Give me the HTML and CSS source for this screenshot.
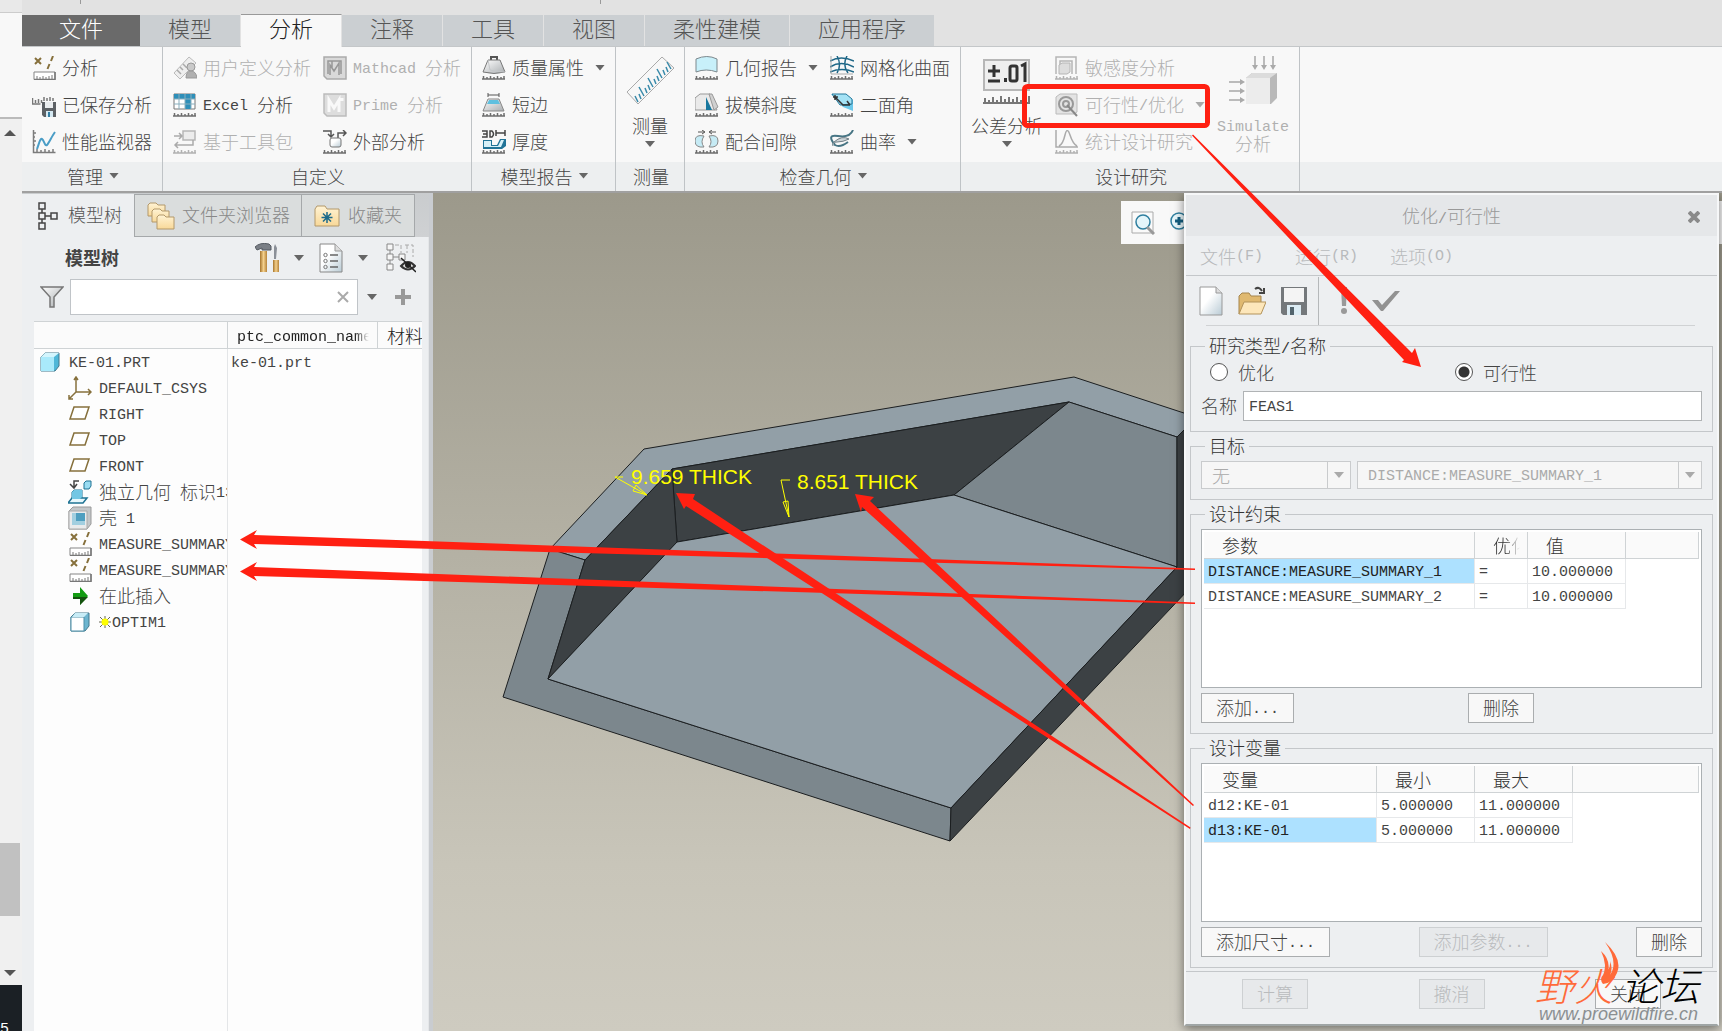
FILE: index.html
```
<!DOCTYPE html>
<html lang="zh-CN">
<head>
    <meta charset="UTF-8">
    <meta name="viewport" content="width=device-width, initial-scale=1.0">
    <title>优化/可行性</title>
    <link rel="stylesheet" href="styles.css">
</head>
<body>
    <!-- icon sprite -->
    <svg class="sprite" width="0" height="0">
        <defs>
            <linearGradient id="metal" x1="0" y1="0" x2="1" y2="1"><stop offset="0" stop-color="#fff"/><stop offset="1" stop-color="#a9adb0"/></linearGradient>
            <linearGradient id="paper" x1="0" y1="0" x2="1" y2="1"><stop offset="0.4" stop-color="#fff"/><stop offset="1" stop-color="#b9cbd5"/></linearGradient>
            <linearGradient id="gold" x1="0" y1="0" x2="0" y2="1"><stop offset="0" stop-color="#fff3d4"/><stop offset="1" stop-color="#f8d898"/></linearGradient>
            <linearGradient id="wood" x1="0" y1="0" x2="1" y2="0"><stop offset="0" stop-color="#a5742c"/><stop offset="0.5" stop-color="#f4d08c"/><stop offset="1" stop-color="#b5833a"/></linearGradient>
        </defs>
        <symbol id="ticks" viewBox="0 0 24 24"><path d="M0 23h23M1.500 23v-3M5 23v-2M8.500 23v-3M12 23v-2M15.500 23v-3M19 23v-2M22 23v-3" stroke="#6d6d6d" stroke-width="1.500" fill="none"/></symbol>
        <symbol id="i-measure" viewBox="0 0 24 24"><path d="M3 2l6 6M9 2l-6 6M21 0l-2 5M17.500 8l-2 5" stroke="#86703c" stroke-width="2" fill="none"/><path d="M2 16h21v7.500h-21z" fill="#fff" stroke="#858585"/><path d="M2 23.500h21v-7.500" stroke="#777" stroke-width="1.500" fill="none"/><path d="M5 23v-3M8 23v-2M11 23v-3M14 23v-2M17 23v-3M20 23v-4" stroke="#777"/></symbol>
        <symbol id="i-saved" viewBox="0 0 24 24"><path d="M.5 5v6h8M3.500 10v-3M6.500 10v-4M9.500 10v-3M12 8V4M15 8V5M18 8V4M21 8V5M.5 11h8" stroke="#777" stroke-width="1.500" fill="none"/><path d="M10 9h14v15h-12l-2-2z" fill="#5c6064"/><path d="M13 9h8v6h-8z" fill="#e9ecee"/><path d="M14 18h7v6h-7z" fill="#d5e9f2"/><path d="M16 19h2v5h-2z" fill="#327fa5"/></symbol>
        <symbol id="i-monitor" viewBox="0 0 24 24"><path d="M1.500 0v22.500h22M1 3h3M1 7h2M1 11h3M1 15h2M5 22v-3M9 22v-2M13 22v-3M17 22v-2M21 22v-3" stroke="#7c7c7c" stroke-width="1.500" fill="none"/><path d="M5 19C7 14 8 8 10 9s3 8 5 6 5-9 8-13" fill="none" stroke="#4a9dc6" stroke-width="2"/></symbol>
        <symbol id="i-user" viewBox="0 0 24 24"><path d="M1 17L16 1l7 6L7 23z" fill="#eee" stroke="#bbb"/><path d="M4 14l4 4M7 11l3 3M10 8l4 4" stroke="#aaa" stroke-width="1.500"/><circle cx="18" cy="11" r="4" fill="#c9c9c9" stroke="#999"/><path d="M13 22q0-7 5-7t6 7z" fill="#b0b0b0" stroke="#999"/></symbol>
        <symbol id="i-excel" viewBox="0 0 24 24"><path d="M1 1h21v15h-21z" fill="#fff" stroke="#777"/><path d="M1 1h21v5h-21zM12 6h6v10h-6z" fill="#2e8fb9"/><path d="M1 6h21M1 11h21M6 1v15M12 1v15M18 1v15" stroke="#89aebd" fill="none"/><use href="#ticks"/></symbol>
        <symbol id="i-toolkit" viewBox="0 0 24 24"><path d="M10 1h12v9h-12z" fill="#ececec" stroke="#b6b6b6" stroke-width="1.500"/><path d="M1 6h8M6 3l3 3-3 3M20 10v5h-18M5 12l-3 3 3 3" stroke="#aaa" stroke-width="1.500" fill="none"/><g opacity=".5"><use href="#ticks"/></g></symbol>
        <symbol id="i-mathcad" viewBox="0 0 24 24"><path d="M1 1h22v22h-19l-3-3z" fill="#d9d9d9" stroke="#aaa" stroke-width="1.500"/><path d="M5 18V5h13v13M7 19V9l4 6 5-8v12M9 5v7" stroke="#979797" stroke-width="1.500" fill="none"/></symbol>
        <symbol id="i-prime" viewBox="0 0 24 24"><path d="M1 1h22v22h-19l-3-3z" fill="#ddd" stroke="#bcbcbc" stroke-width="1.500"/><path d="M6 19V7l5 8 5-8v12M19 5v3" stroke="#f9f9f9" stroke-width="3" fill="none"/></symbol>
        <symbol id="i-external" viewBox="0 0 24 24"><path d="M0 1h8v6M5 4l3 3 3-3M15 8V3h8M20 0l3 3-3 3" stroke="#555" stroke-width="1.500" fill="none"/><rect x="7" y="8" width="11" height="9" rx="2" fill="url(#paper)" stroke="#777"/><use href="#ticks"/></symbol>
        <symbol id="i-mass" viewBox="0 0 24 24"><path d="M9 4V1h6v3" stroke="#555" stroke-width="2" fill="none"/><path d="M6 4h12l5 12q-11 3-22 0z" fill="url(#metal)" stroke="#777"/><path d="M6 4l2 10q5 2 15 2" fill="none" stroke="#c4c7c9"/><use href="#ticks"/></symbol>
        <symbol id="i-short" viewBox="0 0 24 24"><path d="M6 2h11M6 0v4M17 0v4" stroke="#555" fill="none"/><path d="M6 6h11l5 12H1z" fill="url(#metal)" stroke="#888"/><path d="M7 7h9l2 4H5z" fill="#5fc0df"/><use href="#ticks"/></symbol>
        <symbol id="i-thick" viewBox="0 0 24 24"><path d="M0 1h5v6H0M1 4h4M8 1v6h2q3-3 0-6zM14 3h9M14 0v6M23 0v6" stroke="#444" stroke-width="1.500" fill="none"/><path d="M1 10h9v5h5l3-6h6v7l-4 3H1z" fill="#207397"/><path d="M2 11h7v5h7l3-6h3l-3 7H2z" fill="#d6f0f8"/><use href="#ticks"/></symbol>
        <symbol id="i-ruler" viewBox="0 0 48 48"><path d="M1 36L36 1l12 11L12 48z" fill="#f7f7f7" stroke="#aaa"/><path d="M12 46l-3-6M15 43l-2-5M18 40l-5-9M21 37l-2-5M24 34l-2-5M27 31l-5-9M30 28l-2-5M33 25l-2-5M36 22l-5-9M39 19l-2-5M42 16l-2-5M45 13l-4-7" stroke="#3889a9" stroke-width="1.500"/></symbol>
        <symbol id="i-geom" viewBox="0 0 24 24"><path d="M1 3q11-5 21 0v13q-11-4-21 0z" fill="#c8f0fa" stroke="#7c888d"/><use href="#ticks"/></symbol>
        <symbol id="i-draft" viewBox="0 0 24 24"><path d="M0 5l5-4h10l7 16H0z" fill="#eaeaea" stroke="#999"/><path d="M11 4l6 13h-6z" fill="#18779e"/><path d="M14 1h3l6 13-4 3z" fill="#d0d0d0" stroke="#999"/><use href="#ticks"/></symbol>
        <symbol id="i-clear" viewBox="0 0 24 24"><path d="M3 2h6M21 2h-6M7 0l3 2-3 2M17 0l-3 2 3 2" stroke="#555" fill="none"/><path d="M9 6Q0 4 0 11t9 6q-4-5 0-11zM14 6q9-2 9 5t-9 6q4-5 0-11z" fill="#c6ebf5" stroke="#888"/><use href="#ticks"/></symbol>
        <symbol id="i-mesh" viewBox="0 0 24 24"><path d="M0 5q11-6 24 0M0 11q11-7 24 0M0 16q12-5 24 0M7 0q5 9 0 17M17 0q-5 9 1 17" fill="none" stroke="#1e6787" stroke-width="1.500"/><path d="M1 0v18h22" stroke="#aaa" fill="none"/><use href="#ticks"/></symbol>
        <symbol id="i-dihedral" viewBox="0 0 24 24"><path d="M1 1h15l7 6v11l-10-4z" fill="#6cc8ea"/><path d="M2 1l8 11 12-1V6l-6-5z" fill="#a4e2f5" stroke="#26799b"/><path d="M3 4h5M5 2v5M5 4l8 8h7M17 8l3 4" stroke="#333" stroke-width="1.500" fill="none"/><use href="#ticks"/></symbol>
        <symbol id="i-curve" viewBox="0 0 24 24"><path d="M23 0Q20 8 8 6T5 15q5 3 13-3" fill="none" stroke="#477584" stroke-width="2"/><path d="M4 12q8-7 15-3-6 3-12 3t-4 4" fill="#cdd5d9" stroke="#718087"/><use href="#ticks"/></symbol>
        <symbol id="i-tol" viewBox="0 0 48 48"><path d="M1 4h45v30H1z" fill="#efefef" stroke="#b7b7b7" stroke-width="2"/><path d="M5 15h12M11 9v12M5 25h12M38 10l4-2v18" fill="none" stroke="#333" stroke-width="3"/><rect x="27" y="10" width="7" height="15" rx="2" fill="none" stroke="#333" stroke-width="3"/><path d="M21 22h3v4h-3z" fill="#333"/><path d="M0 47h47M2 47v-5M6 47v-3M10 47v-6M14 47v-3M18 47v-7M22 47v-4M26 47v-6M30 47v-4M34 47v-6M38 47v-3M42 47v-6M46 47v-7" stroke="#777" stroke-width="2"/></symbol>
        <symbol id="i-sens" viewBox="0 0 24 24"><path d="M1 18V1h20v17M5 18V5h12v13" fill="none" stroke="#b5b5b5" stroke-width="1.500"/><path d="M4 9l3-2h8v9l-3 2H4z" fill="#ddd" stroke="#b5b5b5"/><g opacity=".5"><use href="#ticks"/></g></symbol>
        <symbol id="i-feas" viewBox="0 0 24 24"><path d="M1 4l4-3h17v18l-3 2H1z" fill="#e3e3e3" stroke="#bbb"/><circle cx="11" cy="11" r="7" fill="none" stroke="#999" stroke-width="2"/><circle cx="11" cy="11" r="3" fill="none" stroke="#999" stroke-width="2"/><path d="M12 12l10 11" stroke="#888" stroke-width="2"/></symbol>
        <symbol id="i-stat" viewBox="0 0 24 24"><path d="M1 0v17h22M4 16Q8 14 10 5t5 0 7 11" fill="none" stroke="#aaa" stroke-width="1.500"/><g opacity=".5"><use href="#ticks"/></g></symbol>
        <symbol id="i-sim" viewBox="0 0 48 48"><path d="M17 22l6-5h25v25l-6 6H17z" fill="#b9b9b9"/><path d="M17 22h24v26H17z" fill="#ececec"/><path d="M17 22l6-5h25l-7 5z" fill="#dcdcdc"/><path d="M26 0v11M35 0v11M44 0v11M0 26h13M0 35h13M0 44h13" stroke="#bbb" stroke-width="2"/><path d="M23 9l3 5 3-5zM32 9l3 5 3-5zM41 9l3 5 3-5zM11 23l5 3-5 3zM11 32l5 3-5 3zM11 41l5 3-5 3z" fill="#aaa"/></symbol>
        <symbol id="i-tree" viewBox="0 0 20 28"><path d="M1 1h6v6H1zM1 11h6v6H1zM1 21h6v6H1zM13 11h6v6h-6zM4 7v4M4 17v4M7 14h6" fill="none" stroke="#444" stroke-width="1.500"/></symbol>
        <symbol id="i-folders" viewBox="0 0 28 28"><g fill="url(#gold)" stroke="#b3986a"><path d="M1 14V3l2-2h6l2 2h7v11z"/><path d="M5 20V9l2-2h6l2 2h7v11z"/><path d="M10 27V15l2-2h5l2 2h8v12z"/></g></symbol>
        <symbol id="i-fav" viewBox="0 0 26 22"><path d="M1 21V4l2-3h8l2 3h12v17z" fill="url(#gold)" stroke="#b3986a"/><path d="M13 7v11M7.500 12.500h11M9 8.500l8 8M17 8.500l-8 8" stroke="#1b6a8a" stroke-width="1.500"/></symbol>
        <symbol id="i-tools" viewBox="0 0 24 30"><path d="M0 4q5-5 14-3l2 2v4h-9V5L2 7z" fill="#7a7f86" stroke="#555b62"/><path d="M5 8h7v21H5z" fill="url(#wood)"/><path d="M20 1l2 4-1 11h-2L19 4z" fill="#8b9098"/><path d="M18 17h6v12h-6z" fill="url(#wood)"/></symbol>
        <symbol id="i-list" viewBox="0 0 24 30"><path d="M1 1h15l7 7v21H1z" fill="url(#paper)" stroke="#888"/><path d="M16 1v7h7" fill="#ddd" stroke="#999"/><path d="M11 12h8M11 18h8M11 24h8" stroke="#666" stroke-width="1.500"/><g fill="none" stroke="#777"><circle cx="6.500" cy="12" r="1.700"/><circle cx="6.500" cy="18" r="1.700"/><circle cx="6.500" cy="24" r="1.700"/></g></symbol>
        <symbol id="i-hide" viewBox="0 0 30 30"><path d="M1 1h6v6H1zM1 11h6v6H1zM1 21h6v6H1zM13 11h6v6h-6zM4 7v4M4 17v4M7 14h6" fill="#f6f6f6" stroke="#888"/><path d="M9 2h6v8M19 2h8v12M21 2v8" fill="none" stroke="#aaa" stroke-dasharray="4 2"/><path d="M15 23q7-8 14 0-7 7-14 0z" fill="#ddd" stroke="#333" stroke-width="2"/><circle cx="22" cy="22" r="3" fill="#222"/><path d="M15 15l15 14" stroke="#222" stroke-width="1.500"/></symbol>
        <symbol id="i-funnel" viewBox="0 0 24 22"><path d="M1 1h22l-9 10v10h-4V11z" fill="url(#metal)" stroke="#777" stroke-width="1.500"/></symbol>
        <symbol id="i-part" viewBox="0 0 20 20"><path d="M1 5l4-4h14v13l-4 5H1z" fill="#4fb7d8" stroke="#43798d"/><path d="M1 5h13v14H1z" fill="#a9eafb"/><path d="M1 5l4-4h14l-5 4z" fill="#d3f5fd"/></symbol>
        <symbol id="i-optim" viewBox="0 0 20 20"><path d="M1 5l4-4h14v13l-4 5H1z" fill="#6db5cf" stroke="#43798d"/><path d="M1 5h13v14H1z" fill="#fff" stroke="#4c8fa8"/><path d="M2 5l3-4h13l-4 4z" fill="#c8ecf6"/></symbol>
        <symbol id="i-csys" viewBox="0 0 24 24"><path d="M8 1v15h15M8 16l-7 7M6 4l2-3 2 3M20 13l3 3-3 3M1 19v4h4" fill="none" stroke="#86703c" stroke-width="1.500"/></symbol>
        <symbol id="i-plane" viewBox="0 0 24 24"><path d="M6 5h15l-4 12H2z" fill="#fff" stroke="#86703c" stroke-width="1.500"/></symbol>
        <symbol id="i-indep" viewBox="0 0 24 24"><path d="M16 3l2-2h5v5l-2 3h-5zM4 12l2-2h8v8l-2 2H4z" fill="#9adcf2" stroke="#1f7393"/><path d="M0 23l4-5h15l-4 5z" fill="#e8f8fc" stroke="#1f7393" stroke-width="1.500"/><path d="M4 12l2-2h8v7l-2 2H4z" fill="#73c7e4"/><path d="M11 1H6v7M2 4l4 4 3-4" stroke="#444" stroke-width="1.500" fill="none"/></symbol>
        <symbol id="i-shell" viewBox="0 0 24 24"><path d="M1 5l4-4h18v17l-4 5H1z" fill="#c3c7c9" stroke="#999"/><path d="M1 5h18v18H1z" fill="#e9ebec" stroke="#aaa"/><path d="M4 7h13v12H4z" fill="#4f9fc0"/><path d="M4 7v12l4-4V7zM4 19h13v-4H8z" fill="#a2cfe0"/></symbol>
        <symbol id="i-insert" viewBox="0 0 24 24"><path d="M5 9h7V3l8 9-8 9v-6H5z" fill="#149c14"/><path d="M5 13h15l-8 8v-6H5z" fill="#14520f"/></symbol>
        <symbol id="i-spark" viewBox="0 0 12 12"><path d="M6 0v12M0 6h12M1 1l10 10M11 1L1 11" stroke="#665" /><circle cx="6" cy="6" r="3.500" fill="#ff0"/></symbol>
        <symbol id="i-new" viewBox="0 0 24 30"><path d="M1 1h16l6 6v22H1z" fill="url(#paper)" stroke="#999"/><path d="M17 1v6h6" fill="#ddd" stroke="#999"/></symbol>
        <symbol id="i-open" viewBox="0 0 28 30"><path d="M1 28V10l3-3h7l2 3h10v8" fill="#e0b970" stroke="#a5854d"/><path d="M1 28l5-12h22l-5 12z" fill="#fde7bb" stroke="#b3935a"/><path d="M17 3q4-3 7 2M26 2v5h-5" stroke="#444" stroke-width="2" fill="none"/></symbol>
        <symbol id="i-save" viewBox="0 0 26 30"><path d="M0 1h26v28H2l-2-2z" fill="#74787b"/><path d="M3 2h20v14H3z" fill="#f4f4f4"/><path d="M6 19h14v10H6z" fill="#dcecf4"/><path d="M9 21h4v8H9z" fill="#52646d"/></symbol>
        <symbol id="i-run" viewBox="0 0 8 28"><path d="M1 0h6L6 19H2z" fill="#999"/><circle cx="4" cy="24" r="3" fill="#999"/></symbol>
        <symbol id="i-check" viewBox="0 0 28 20"><path d="M0 9h6l4 5L23 0h5L11 20H9z" fill="#929292"/></symbol>
        <symbol id="i-fit" viewBox="0 0 24 24"><path d="M1 1h21v21H1z" fill="#fafafa" stroke="#aaa"/><circle cx="12" cy="11" r="7" fill="#e4f5fa" stroke="#2f7f9f" stroke-width="1.500"/><path d="M16 16l7 7" stroke="#999" stroke-width="3"/></symbol>
        <symbol id="i-zoomin" viewBox="0 0 24 24"><circle cx="10" cy="10" r="8" fill="#e9f8fc" stroke="#2f7f9f" stroke-width="1.500"/><path d="M6 10h8M10 6v8" stroke="#145f80" stroke-width="3"/><path d="M16 16l7 7" stroke="#999" stroke-width="3"/></symbol>
    </svg>

    <div class="app">
        <aside class="gutter">
            <div class="gutter-top"></div>
            <div class="gutter-blank"></div>
            <div class="scrollbar">
                <i class="arrow-up"></i>
                <div class="thumb"></div>
                <i class="arrow-down"></i>
            </div>
            <div class="taskbar"><span class="en">5</span></div>
        </aside>

        <div class="main">
            <header class="ribbon">
                <div class="titlebar"><i class="tick tick-1"></i><i class="tick tick-2"></i></div>
                <nav class="tabs">
                    <button class="tab file">文件</button>
                    <button class="tab">模型</button>
                    <button class="tab active">分析</button>
                    <button class="tab">注释</button>
                    <button class="tab">工具</button>
                    <button class="tab">视图</button>
                    <button class="tab wide">柔性建模</button>
                    <button class="tab wide">应用程序</button>
                </nav>
                <div class="groups">
                    <section class="group g-manage">
                        <div class="group-body">
                            <div class="col">
                                <button class="tool"><svg><use href="#i-measure"/></svg>分析</button>
                                <button class="tool"><svg><use href="#i-saved"/></svg>已保存分析</button>
                                <button class="tool"><svg><use href="#i-monitor"/></svg>性能监视器</button>
                            </div>
                        </div>
                        <div class="group-label">管理<i class="caret"></i></div>
                    </section>
                    <section class="group g-custom">
                        <div class="group-body">
                            <div class="col">
                                <button class="tool" disabled><svg><use href="#i-user"/></svg>用户定义分析</button>
                                <button class="tool"><svg><use href="#i-excel"/></svg><span class="en">Excel </span>分析</button>
                                <button class="tool" disabled><svg><use href="#i-toolkit"/></svg>基于工具包</button>
                            </div>
                            <div class="col">
                                <button class="tool" disabled><svg><use href="#i-mathcad"/></svg><span class="en">Mathcad </span>分析</button>
                                <button class="tool" disabled><svg><use href="#i-prime"/></svg><span class="en">Prime </span>分析</button>
                                <button class="tool"><svg><use href="#i-external"/></svg>外部分析</button>
                            </div>
                        </div>
                        <div class="group-label">自定义</div>
                    </section>
                    <section class="group g-report">
                        <div class="group-body">
                            <div class="col">
                                <button class="tool"><svg><use href="#i-mass"/></svg>质量属性<i class="caret"></i></button>
                                <button class="tool"><svg><use href="#i-short"/></svg>短边</button>
                                <button class="tool"><svg><use href="#i-thick"/></svg>厚度</button>
                            </div>
                        </div>
                        <div class="group-label">模型报告<i class="caret"></i></div>
                    </section>
                    <section class="group g-measure">
                        <div class="group-body">
                            <button class="big-tool"><svg><use href="#i-ruler"/></svg><span>测量</span><i class="caret"></i></button>
                        </div>
                        <div class="group-label">测量</div>
                    </section>
                    <section class="group g-inspect">
                        <div class="group-body">
                            <div class="col">
                                <button class="tool"><svg><use href="#i-geom"/></svg>几何报告<i class="caret"></i></button>
                                <button class="tool"><svg><use href="#i-draft"/></svg>拔模斜度</button>
                                <button class="tool"><svg><use href="#i-clear"/></svg>配合间隙</button>
                            </div>
                            <div class="col">
                                <button class="tool"><svg><use href="#i-mesh"/></svg>网格化曲面</button>
                                <button class="tool"><svg><use href="#i-dihedral"/></svg>二面角</button>
                                <button class="tool"><svg><use href="#i-curve"/></svg>曲率<i class="caret"></i></button>
                            </div>
                        </div>
                        <div class="group-label">检查几何<i class="caret"></i></div>
                    </section>
                    <section class="group g-study">
                        <div class="group-body">
                            <button class="big-tool"><svg><use href="#i-tol"/></svg><span>公差分析</span><i class="caret"></i></button>
                            <div class="col">
                                <button class="tool" disabled><svg><use href="#i-sens"/></svg>敏感度分析</button>
                                <button class="tool" disabled><svg><use href="#i-feas"/></svg>可行性<span class="en">/</span>优化<i class="caret"></i></button>
                                <button class="tool" disabled><svg><use href="#i-stat"/></svg>统计设计研究</button>
                            </div>
                            <button class="big-tool" disabled><svg><use href="#i-sim"/></svg><span class="en">Simulate</span><span>分析</span></button>
                        </div>
                        <div class="group-label">设计研究</div>
                    </section>
                    <section class="group g-rest">
                        <div class="group-body"></div>
                        <div class="group-label"></div>
                    </section>
                </div>
            </header>

            <div class="workspace">
                <aside class="navigator">
                    <div class="nav-tabs">
                        <button class="nav-tab nav-tree active"><svg width="20" height="28"><use href="#i-tree"/></svg>模型树</button>
                        <button class="nav-tab nav-folders"><svg width="28" height="28"><use href="#i-folders"/></svg>文件夹浏览器</button>
                        <button class="nav-tab nav-fav"><svg width="26" height="22"><use href="#i-fav"/></svg>收藏夹</button>
                    </div>
                    <div class="nav-head">
                        <h2>模型树</h2>
                        <button aria-label="设置"><svg width="24" height="30"><use href="#i-tools"/></svg><i class="caret"></i></button>
                        <button aria-label="显示"><svg width="24" height="30"><use href="#i-list"/></svg><i class="caret"></i></button>
                        <button aria-label="隐藏"><svg width="30" height="30"><use href="#i-hide"/></svg></button>
                    </div>
                    <div class="filter">
                        <svg width="24" height="22"><use href="#i-funnel"/></svg>
                        <div class="filter-box">
                            <input type="text" aria-label="过滤器">
                            <button aria-label="清除"><svg width="12" height="12"><path d="M1 1l10 10M11 1L1 11" stroke="#aaa" stroke-width="2"/></svg></button>
                        </div>
                        <i class="caret"></i>
                        <button aria-label="添加"><svg width="16" height="16"><path d="M8 0v16M0 8h16" stroke="#999" stroke-width="4"/></svg></button>
                    </div>
                    <div class="tree-wrap">
                        <table class="tree">
                            <colgroup><col class="c-name"><col class="c-common"><col></colgroup>
                            <thead>
                                <tr><th></th><th><span class="en fade">ptc_common_name</span></th><th>材料</th></tr>
                            </thead>
                            <tbody>
                                <tr class="root"><td><div><svg width="20" height="20"><use href="#i-part"/></svg><span class="en">KE-01.PRT</span></div></td><td><div><span class="en">ke-01.prt</span></div></td><td></td></tr>
                                <tr><td><div><svg><use href="#i-csys"/></svg><span class="en">DEFAULT_CSYS</span></div></td><td></td><td></td></tr>
                                <tr><td><div><svg><use href="#i-plane"/></svg><span class="en">RIGHT</span></div></td><td></td><td></td></tr>
                                <tr><td><div><svg><use href="#i-plane"/></svg><span class="en">TOP</span></div></td><td></td><td></td></tr>
                                <tr><td><div><svg><use href="#i-plane"/></svg><span class="en">FRONT</span></div></td><td></td><td></td></tr>
                                <tr><td><div><svg><use href="#i-indep"/></svg>独立几何<span class="en"> </span>标识<span class="en">13</span></div></td><td></td><td></td></tr>
                                <tr><td><div><svg><use href="#i-shell"/></svg>壳<span class="en"> 1</span></div></td><td></td><td></td></tr>
                                <tr><td><div><svg><use href="#i-measure"/></svg><span class="en">MEASURE_SUMMARY_1</span></div></td><td></td><td></td></tr>
                                <tr><td><div><svg><use href="#i-measure"/></svg><span class="en">MEASURE_SUMMARY_2</span></div></td><td></td><td></td></tr>
                                <tr><td><div><svg><use href="#i-insert"/></svg>在此插入</div></td><td></td><td></td></tr>
                                <tr><td><div><svg class="small"><use href="#i-optim"/></svg><svg class="spark"><use href="#i-spark"/></svg><span class="en">OPTIM1</span></div></td><td></td><td></td></tr>
                            </tbody>
                        </table>
                    </div>
                </aside>

                <main class="viewport">
                    <!-- shelled part, drawn in viewport units -->
                    <svg class="model" width="1289" height="838" viewBox="433 193 1289 838">
                        <g stroke="#1b1e20" stroke-width="1" stroke-linejoin="round">
                            <path d="M550 549L644 449 1074 377 1190 415 1190 424 1177 437 1069 402 672 469 585 560z" fill="#929fa7"/>
                            <path d="M550 549L585 560 548 679 951 808 950 841 503 697z" fill="#7c878d"/>
                            <path d="M672 469L1069 402 954 495 677 542z" fill="#3c4144"/>
                            <path d="M672 469L677 542 548 679 585 560z" fill="#3c4144"/>
                            <path d="M1069 402L1177 437 1177 567 954 495z" fill="#7c878d"/>
                            <path d="M677 542L954 495 1177 567 951 808 548 679z" fill="#929fa7"/>
                            <path d="M951 808L1177 567 1177 437 1190 424 1190 588 950 841z" fill="#3c4144"/>
                        </g>
                        <g fill="none" stroke="#ff0" stroke-width="1">
                            <path d="M623 477h-8l32 18-14-4 3-6 11 10"/>
                            <path d="M790 480h-9l8 37-6-15 5-1 1 16"/>
                        </g>
                        <text x="631" y="484">9.659 THICK</text>
                        <text x="797" y="489">8.651 THICK</text>
                    </svg>

                    <div class="view-tools">
                        <svg width="24" height="24"><use href="#i-fit"/></svg>
                        <svg width="24" height="24"><use href="#i-zoomin"/></svg>
                    </div>

                    <form class="dialog" onsubmit="return false">
                        <div class="dialog-title"><span>优化<span class="en">/</span>可行性</span><button type="button" aria-label="关闭"><svg width="12" height="12"><path d="M1 1l10 10M11 1L1 11" stroke="#8a8a8a" stroke-width="4"/></svg></button></div>
                        <div class="menubar">
                            <button type="button" disabled>文件<span class="en">(F)</span></button>
                            <button type="button" disabled>运行<span class="en">(R)</span></button>
                            <button type="button" disabled>选项<span class="en">(O)</span></button>
                        </div>
                        <div class="toolbar">
                            <button type="button" aria-label="新建"><svg width="24" height="30"><use href="#i-new"/></svg></button>
                            <button type="button" aria-label="打开"><svg width="28" height="30"><use href="#i-open"/></svg></button>
                            <button type="button" aria-label="保存"><svg width="26" height="30"><use href="#i-save"/></svg></button>
                            <i class="sep"></i>
                            <button type="button" aria-label="运行" disabled><svg width="8" height="28"><use href="#i-run"/></svg></button>
                            <button type="button" aria-label="确定" disabled><svg width="28" height="20"><use href="#i-check"/></svg></button>
                        </div>

                        <fieldset class="study">
                            <legend>研究类型<span class="en">/</span>名称</legend>
                            <div class="radios">
                                <label><input type="radio" name="type">优化</label>
                                <label><input type="radio" name="type" checked>可行性</label>
                            </div>
                            <div class="name-row">
                                <label for="study-name">名称</label>
                                <input type="text" id="study-name" value="FEAS1">
                            </div>
                        </fieldset>

                        <fieldset>
                            <legend>目标</legend>
                            <div class="combos">
                                <div class="combo short"><select aria-label="目标" disabled><option>无</option></select><span><i class="caret"></i></span></div>
                                <div class="combo"><select class="en" aria-label="目标参数" disabled><option>DISTANCE:MEASURE_SUMMARY_1</option></select><span><i class="caret"></i></span></div>
                            </div>
                        </fieldset>

                        <fieldset>
                            <legend>设计约束</legend>
                            <div class="listbox">
                                <table>
                                    <colgroup><col class="w-param"><col class="w-op"><col class="w-num"><col></colgroup>
                                    <thead><tr><th>参数</th><th><div class="fade">优化</div></th><th>值</th><th></th></tr></thead>
                                    <tbody>
                                        <tr><td class="selected">DISTANCE:MEASURE_SUMMARY_1</td><td>=</td><td>10.000000</td></tr>
                                        <tr><td>DISTANCE:MEASURE_SUMMARY_2</td><td>=</td><td>10.000000</td></tr>
                                    </tbody>
                                </table>
                            </div>
                            <div class="actions constraints">
                                <button type="button">添加<span class="en">...</span></button>
                                <button type="button">删除</button>
                            </div>
                        </fieldset>

                        <fieldset>
                            <legend>设计变量</legend>
                            <div class="listbox">
                                <table>
                                    <colgroup><col class="w-var"><col class="w-num"><col class="w-num"><col></colgroup>
                                    <thead><tr><th>变量</th><th>最小</th><th>最大</th><th></th></tr></thead>
                                    <tbody>
                                        <tr><td>d12:KE-01</td><td>5.000000</td><td>11.000000</td></tr>
                                        <tr><td class="selected">d13:KE-01</td><td>5.000000</td><td>11.000000</td></tr>
                                    </tbody>
                                </table>
                            </div>
                            <div class="actions">
                                <button type="button">添加尺寸<span class="en">...</span></button>
                                <button type="button" disabled>添加参数<span class="en">...</span></button>
                                <button type="button">删除</button>
                            </div>
                        </fieldset>

                        <div class="dialog-foot">
                            <button type="button" disabled>计算</button>
                            <button type="button" disabled>撤消</button>
                            <button type="button">关闭</button>
                        </div>
                        <div class="watermark">
                            <div class="brand"><span>野火</span><span>论坛</span></div>
                            <div class="url">www.proewildfire.cn</div>
                            <svg class="flame" width="18" height="42"><path d="M4 0Q22 17 16 31 12 41 2 42-2 37 2 33 10 28 9 19 12 27 9 33 18 20 4 0zM0 9q10 9 7 21-2 4-6 5 3-5 3-12-1-8-4-14z" fill="#ff6a3a"/></svg>
                        </div>
                    </form>
                </main>
            </div>
        </div>

        <!-- callout arrows -->
        <svg class="callouts" width="1722" height="1031">
            <rect x="1024.500" y="86.500" width="183" height="39" rx="3" fill="none" stroke="#ff2012" stroke-width="5"/>
            <g fill="#ff2012">
                <path d="M240 539.500L257 530 254 535 1195 568.500 1195 570 254 544 257 549z"/>
                <path d="M240 571.500L257 562 254 567 1195 602.500 1195 604 254 576 257 581z"/>
                <path d="M676 493L695 494 693 499 1190.500 827.500 1190 829 686 506 684 509z"/>
                <path d="M855 494L874 497 870 501 1194 805 1193 806 862 507 861 512z"/>
                <path d="M1421 367L1415 348 1412 353 1193 134.500 1192 135.500 1404 360 1402 362z"/>
            </g>
        </svg>
    </div>
</body>
</html>
```

FILE: styles.css
```
* {
    box-sizing: border-box;
}
body {
    margin: 0;
    font-family: "Noto Sans CJK SC", sans-serif;
    font-size: 18px;
    font-weight: 300;
    line-height: 20px;
    color: #444;
}
button, input, select {
    font: inherit;
    color: inherit;
    border: 0;
    padding: 0;
    margin: 0;
    background: none;
    border-radius: 0;
}
button {
    display: flex;
    align-items: center;
    white-space: nowrap;
}
svg {
    display: block;
    flex: none;
}
.sprite {
    position: absolute;
}
.en {
    font-family: "Liberation Mono", monospace;
    font-size: 15px;
    font-weight: 400;
    white-space: pre;
}
.caret {
    flex: none;
    width: 10px;
    height: 6px;
    background: #666;
    clip-path: polygon(0 0, 100% 0, 50% 100%);
}
.app {
    position: relative;
    display: flex;
    height: 100vh;
    overflow: hidden;
}

/* left edge */
.gutter {
    display: flex;
    flex-direction: column;
    flex: none;
    width: 22px;
    background: #f0f0f0;
}
.gutter-top {
    height: 13px;
    background: #e9e9e9;
    border-bottom: 1px solid #ccc;
}
.gutter-blank {
    height: 106px;
    background: #f8f8f8;
    border-bottom: 2px solid #bbb;
}
.scrollbar {
    flex: 1;
    display: flex;
    flex-direction: column;
    padding: 11px 2px 9px 0;
}
.arrow-up, .arrow-down {
    width: 12px;
    height: 6px;
    margin-left: 4px;
    background: #555;
}
.arrow-up {
    clip-path: polygon(50% 0, 100% 100%, 0 100%);
}
.arrow-down {
    clip-path: polygon(0 0, 100% 0, 50% 100%);
}
.thumb {
    height: 73px;
    margin: auto 0 54px;
    background: #c1c1c1;
}
.taskbar {
    height: 46px;
    padding-top: 30px;
    background: #1b2025;
    color: #fff;
}
.main {
    flex: 1;
    min-width: 0;
    display: flex;
    flex-direction: column;
}

/* ribbon */
.ribbon {
    background: #e2e2e2;
    border-bottom: 2px solid #a0a0a0;
}
.titlebar {
    position: relative;
    height: 14px;
}
.tick {
    position: absolute;
    top: 0;
    width: 1px;
    height: 4px;
    background: #999;
}
.tick-1 {
    left: 58px;
}
.tick-2 {
    left: 578px;
}
.tabs {
    display: flex;
    height: 33px;
    border-bottom: 1px solid #c4c7c9;
}
.tab {
    justify-content: center;
    width: 101px;
    margin-top: 1px;
    padding-bottom: 8px;
    font-size: 22px;
    line-height: 24px;
    color: #555;
    background: #cbcfd2;
    border-right: 1px solid #e2e2e2;
}
.tab.file {
    width: 118px;
    color: #fff;
    background: #6a6a6a;
    border: 0;
}
.tab.active {
    margin: 0 0 -1px;
    color: #222;
    background: #f8f8f8;
    border-top: 1px solid #999;
}
.tab.wide {
    width: 145px;
}
.groups {
    display: flex;
    background: #f8f8f8;
}
.group {
    flex: none;
    border-right: 1px solid #bfc3c6;
}
.group-body {
    display: flex;
    height: 115px;
    padding: 3px 0 0 10px;
}
.group-label {
    display: flex;
    align-items: center;
    justify-content: center;
    gap: 6px;
    height: 29px;
    padding: 0 0 2px 2px;
    background: #edeff0;
}
.g-manage {
    width: 141px;
}
.g-custom {
    width: 309px;
}
.g-custom .col:first-child {
    width: 150px;
}
.g-report {
    width: 144px;
}
.g-measure {
    width: 69px;
}
.g-inspect {
    width: 276px;
}
.g-inspect .col:first-child {
    width: 135px;
}
.g-study {
    width: 339px;
}
.g-study .col {
    width: 162px;
    margin-left: 12px;
}
.g-rest {
    flex: 1;
    border: 0;
}
.col {
    display: flex;
    flex-direction: column;
    gap: 1px;
}
.tool {
    height: 36px;
    padding-bottom: 3px;
}
.tool svg {
    width: 24px;
    height: 24px;
    margin: 3px 6px 0 0;
}
.tool .caret {
    margin: 2px 0 0 11px;
}
.tool .en, .actions .en {
    padding-top: 7px;
}
.tool:disabled, .big-tool:disabled {
    color: #b0b0b0;
}
.tool:disabled .caret {
    background: #aaa;
}
.big-tool {
    flex-direction: column;
    align-items: center;
    padding-top: 6px;
}
.big-tool svg {
    width: 48px;
    height: 48px;
    margin-bottom: 11px;
}
.big-tool .caret {
    margin-top: 6px;
}
.big-tool .en {
    height: 18px;
    padding-top: 3px;
}

/* navigator */
.workspace {
    flex: 1;
    display: flex;
    min-height: 0;
}
.navigator {
    display: flex;
    flex-direction: column;
    flex: none;
    width: 411px;
    background: #edeff1;
    border-right: 4px solid #c9ccd0;
    box-shadow: inset -1px 0 #e4e6e8;
}
.nav-tabs {
    display: flex;
    height: 44px;
    padding-top: 1px;
    background: linear-gradient(#c9ccce, #cfd1d3);
}
.nav-tab {
    gap: 7px;
    padding-bottom: 3px;
    color: #888;
    background: #dadddd;
    border: solid #a5a8aa;
    border-width: 1px 1px 1px 0;
}
.nav-tab svg {
    margin-top: 3px;
}
.nav-tab.active {
    width: 113px;
    padding-left: 16px;
    gap: 10px;
    color: #555;
    background: #edeff1;
    border-width: 0 1px 0 0;
}
.nav-folders {
    width: 167px;
    padding-left: 12px;
}
.nav-fav {
    width: 113px;
    padding-left: 12px;
    gap: 8px;
}
.nav-head {
    display: flex;
    align-items: center;
    height: 42px;
    padding-left: 43px;
    gap: 15px;
}
.nav-head h2 {
    flex: 1;
    margin: 0;
    padding-bottom: 2px;
    font-size: 18px;
    font-weight: 700;
}
.nav-head button {
    gap: 15px;
}
.nav-head button:last-child {
    margin-right: 13px;
    margin-left: 3px;
}
.filter {
    display: flex;
    align-items: center;
    height: 36px;
    padding-left: 18px;
}
.filter-box {
    display: flex;
    align-items: center;
    width: 288px;
    height: 36px;
    margin: 0 9px 0 6px;
    padding-right: 8px;
    background: #fff;
    border: 1px solid #c0c4c8;
}
.filter-box input {
    flex: 1;
    min-width: 0;
    height: 100%;
    outline: none;
}
.filter > button {
    margin-left: 18px;
}
.tree-wrap {
    flex: 1;
    margin: 6px 7px 0 12px;
    background: linear-gradient(90deg, transparent 193px, #e4e6e8 193px, #e4e6e8 194px, transparent 194px) #fdfdfd;
    border-top: 1px solid #cfd3d5;
}
.tree {
    width: 100%;
    table-layout: fixed;
    border-collapse: separate;
    border-spacing: 0;
}
.c-name {
    width: 194px;
}
.c-common {
    width: 150px;
}
.tree th {
    height: 27px;
    padding: 0 8px 0 9px;
    font-weight: 300;
    text-align: left;
    overflow: hidden;
    white-space: nowrap;
    border-right: 1px solid #cfd3d5;
    border-bottom: 1px solid #cfd3d5;
    background: #fbfbfb;
    color: #222;
}
.tree th:last-child {
    padding-right: 0;
    border-right: 0;
}
.tree .fade {
    display: block;
    padding-top: 6px;
    overflow: hidden;
}
.fade {
    mask-image: linear-gradient(90deg, #000 calc(100% - 14px), transparent);
}
.tree td {
    height: 26px;
    padding: 0 0 0 3px;
}
.tree td:first-child {
    padding-left: 34px;
    overflow: hidden;
    border-right: 1px solid transparent;
}
.tree .root td:first-child {
    padding-left: 6px;
}
.tree td div {
    display: flex;
    align-items: center;
    height: 26px;
    padding-bottom: 3px;
    white-space: nowrap;
    overflow: hidden;
}
.tree td .en {
    padding-top: 6px;
}
.tree td svg {
    width: 24px;
    height: 24px;
    margin: 3px 7px 0 0;
}
.tree .root svg {
    width: 20px;
    height: 20px;
    margin-right: 9px;
}
.tree td .small {
    width: 20px;
    height: 20px;
    margin: 3px 9px 0 2px;
}
.tree td .spark {
    width: 12px;
    height: 12px;
    margin-right: 1px;
}

/* graphics area */
.viewport {
    position: relative;
    flex: 1;
    min-width: 0;
    overflow: hidden;
    background: linear-gradient(#9c998b, #b5b2a5 45%, #c8c5b9 80%, #cecbc0);
}
.model {
    position: absolute;
    top: 0;
    left: 0;
}
.model text {
    font-family: "Liberation Sans", sans-serif;
    font-size: 21px;
    font-weight: 400;
    fill: #ff0;
}
.view-tools {
    position: absolute;
    top: 8px;
    right: 0;
    display: flex;
    align-items: center;
    gap: 14px;
    width: 601px;
    height: 43px;
    padding-left: 10px;
    background: #f8f8f8;
}

/* dialog */
.dialog {
    position: absolute;
    top: 0;
    right: 3px;
    width: 535px;
    height: 833px;
    background: #edeff1;
    border: 2px solid #f6f7f8;
    border-bottom-color: #9fa5a5;
    box-shadow: 0 2px 10px rgba(0, 0, 0, 0.5);
}
.dialog-title {
    display: flex;
    align-items: center;
    height: 41px;
    padding: 3px 17px 0 29px;
    background: #e5e7e9;
    color: #999;
}
.dialog-title > span {
    flex: 1;
    text-align: center;
}
.menubar {
    display: flex;
    gap: 32px;
    height: 40px;
    padding-left: 14px;
    border-bottom: 1px solid #c4c7ca;
}
.menubar button {
    color: #b8babc;
}
.menubar .en {
    padding-top: 3px;
}
.toolbar {
    display: flex;
    align-items: center;
    height: 50px;
    margin: 0 22px 0 20px;
    border-bottom: 1px solid #d0d2d4;
}
.toolbar button {
    margin-right: 15px;
}
.toolbar button:first-child {
    margin-left: -7px;
}
.toolbar .sep {
    width: 1px;
    height: 48px;
    margin: 0 21px 0 -4px;
    background: #b5b8ba;
}
.toolbar .sep + button {
    margin-right: 24px;
}
fieldset {
    min-width: 0;
    margin: 4px 4px 0;
    padding: 5px 10px 10px;
    border: 1px solid #c4c7ca;
}
fieldset.study {
    margin-top: 10px;
    padding-top: 4px;
}
legend {
    height: 20px;
    margin-left: 4px;
    padding: 0 4px;
    line-height: 18px;
    color: #333;
}
.radios {
    display: flex;
    height: 26px;
    padding: 0 2px 2px 9px;
}
.radios label {
    display: flex;
    align-items: center;
    flex: 1;
    gap: 10px;
}
.radios input {
    appearance: none;
    width: 18px;
    height: 18px;
    background: #fff;
    border: 1px solid #555;
    border-radius: 50%;
}
.radios input:checked {
    background: radial-gradient(#333 5px, #fff 6px);
}
.name-row {
    display: flex;
    align-items: center;
    gap: 6px;
    margin-top: 5px;
}
.name-row label {
    padding-bottom: 2px;
}
.name-row input {
    flex: 1;
    min-width: 0;
    height: 30px;
    padding: 2px 0 0 5px;
    font-family: "Liberation Mono", monospace;
    font-size: 15px;
    font-weight: 400;
    background: #fff;
    border: 1px solid #b0b3b5;
}
.combos {
    display: flex;
    gap: 6px;
}
.combo {
    display: flex;
    flex: 1;
    height: 28px;
    background: #f6f6f6;
    border: 1px solid #c9cbcd;
}
.combo.short {
    flex: none;
    width: 150px;
}
.combo select {
    flex: 1;
    min-width: 0;
    padding-left: 10px;
    appearance: none;
    color: #aaa;
    opacity: 1;
}
.combo select.en {
    padding-top: 4px;
}
.combo span {
    display: flex;
    align-items: center;
    justify-content: center;
    width: 23px;
    border-left: 1px solid #c9cbcd;
}
.combo .caret {
    background: #aaa;
}
.listbox {
    height: 159px;
    padding: 2px;
    background: #fff;
    border: 1px solid #abb0b3;
}
.listbox table {
    width: 100%;
    table-layout: fixed;
    border-collapse: separate;
    border-spacing: 0;
}
.w-param {
    width: 271px;
}
.w-op {
    width: 53px;
}
.w-num {
    width: 98px;
}
.w-var {
    width: 173px;
}
.listbox th {
    height: 27px;
    padding: 0 7px 0 18px;
    font-weight: 300;
    text-align: left;
    white-space: nowrap;
    overflow: hidden;
    color: #333;
    background: #fafafa;
    border-right: 1px solid #cfd3d5;
    border-bottom: 1px solid #cfd3d5;
}
.listbox th div {
    overflow: hidden;
}
.listbox td {
    height: 25px;
    padding: 4px 0 0 4px;
    font-family: "Liberation Mono", monospace;
    font-size: 15px;
    font-weight: 400;
    white-space: nowrap;
    border-right: 1px solid #e6e8ea;
    border-bottom: 1px solid #e6e8ea;
}
.listbox td.selected {
    background: #ade1ff;
    color: #222;
}
.actions {
    display: flex;
    justify-content: space-between;
    margin-top: 5px;
}
.actions button, .dialog-foot button {
    justify-content: center;
    height: 30px;
    padding: 0 14px 3px;
    background: #f8f8f8;
    border: 1px solid #aaadaf;
}
.actions button:disabled, .dialog-foot button:disabled {
    color: #b9bbbd;
    background: #e7e9eb;
    border-color: #cdd0d2;
}
.constraints {
    padding-right: 168px;
}
.dialog-foot {
    display: flex;
    justify-content: space-between;
    margin-top: 3px;
    padding: 7px 56px 0;
    border-top: 1px solid #c4c7ca;
}
.watermark {
    position: absolute;
    right: 12px;
    bottom: 0;
    width: 170px;
    font-style: italic;
}
.brand {
    display: flex;
    gap: 8px;
    font-size: 39px;
    line-height: 40px;
    font-weight: 300;
    color: #000;
}
.brand span:first-child {
    color: #ff6a3a;
}
.url {
    padding-left: 4px;
    font-family: "Liberation Sans", sans-serif;
    font-size: 18px;
    font-weight: 400;
    color: #8b8f92;
}
.flame {
    position: absolute;
    left: 66px;
    top: -22px;
}
.callouts {
    position: absolute;
    top: 0;
    left: 0;
    pointer-events: none;
}
```
